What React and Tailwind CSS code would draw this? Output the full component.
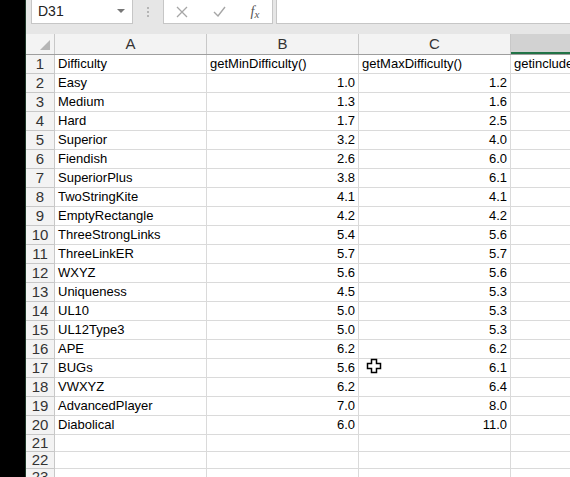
const rows = [
  ["Difficulty", "getMinDifficulty()", "getMaxDifficulty()", "getinclude"],
  ["Easy", "1.0", "1.2"],
  ["Medium", "1.3", "1.6"],
  ["Hard", "1.7", "2.5"],
  ["Superior", "3.2", "4.0"],
  ["Fiendish", "2.6", "6.0"],
  ["SuperiorPlus", "3.8", "6.1"],
  ["TwoStringKite", "4.1", "4.1"],
  ["EmptyRectangle", "4.2", "4.2"],
  ["ThreeStrongLinks", "5.4", "5.6"],
  ["ThreeLinkER", "5.7", "5.7"],
  ["WXYZ", "5.6", "5.6"],
  ["Uniqueness", "4.5", "5.3"],
  ["UL10", "5.0", "5.3"],
  ["UL12Type3", "5.0", "5.3"],
  ["APE", "6.2", "6.2"],
  ["BUGs", "5.6", "6.1"],
  ["VWXYZ", "6.2", "6.4"],
  ["AdvancedPlayer", "7.0", "8.0"],
  ["Diabolical", "6.0", "11.0"],
  [],
  [],
  [],
];

function Cursor() {
  return (
    <svg className="absolute left-[366px] top-[358px]" width="16" height="16" viewBox="0 0 16 16">
      <path
        d="M5.5 1.5h5v4h4v5h-4v4h-5v-4h-4v-5h4z"
        fill="#fff"
        stroke="#000"
        strokeWidth="1.5"
        strokeLinejoin="miter"
      />
    </svg>
  );
}

function FormulaBar() {
  return (
    <div className="flex h-[34px] shrink-0 items-start bg-[#e6e6e6] pl-[5px]">
      <div className="flex h-[24px] w-[102px] items-center justify-between border border-t-0 border-[#c6c6c6] bg-white pl-[6px] pr-[7px]">
        <span className="text-[14px] text-[#222]">D31</span>
        <svg width="8" height="5" viewBox="0 0 8 5">
          <path d="M0 0h8L4 4z" fill="#777" />
        </svg>
      </div>
      <div className="flex h-[24px] w-[30px] flex-col items-center justify-center gap-[2px]">
        <span className="h-[2px] w-[2px] bg-[#b5b5b5]" />
        <span className="h-[2px] w-[2px] bg-[#b5b5b5]" />
        <span className="h-[2px] w-[2px] bg-[#b5b5b5]" />
      </div>
      <div className="flex h-[24px] w-[110px] items-center border border-t-0 border-[#c6c6c6] bg-white">
        <div className="flex w-[36px] justify-center">
          <svg width="12" height="12" viewBox="0 0 12 12">
            <path d="M1 1l10 10M11 1L1 11" stroke="#a6a6a6" strokeWidth="1.3" />
          </svg>
        </div>
        <div className="flex w-[38px] justify-center">
          <svg width="13" height="11" viewBox="0 0 13 11">
            <path d="M1 6l4 4 7-9" stroke="#a6a6a6" strokeWidth="1.4" fill="none" />
          </svg>
        </div>
        <div className="flex w-[34px] items-end justify-center font-['Liberation_Serif',serif] text-[14px] italic text-[#555]">
          f<span className="text-[11px]">x</span>
        </div>
      </div>
      <div className="ml-[3px] h-[24px] flex-1 border border-t-0 border-r-0 border-[#c6c6c6] bg-white" />
    </div>
  );
}

function HeaderRow() {
  const cols = ["A", "B", "C"];
  return (
    <div className="flex h-[21px] shrink-0 border-b border-[#9e9e9e] bg-[#f3f3f3] text-[15px] text-[#333]">
      <div className="relative w-[29px] shrink-0 border-r border-[#c8c8c8]">
        <svg className="absolute bottom-[4px] right-[4px]" width="10" height="10" viewBox="0 0 10 10">
          <path d="M10 0v10H0z" fill="#b5b5b5" />
        </svg>
      </div>
      {cols.map((c) => (
        <div key={c} className="flex w-[152px] shrink-0 items-center justify-center border-r border-[#c8c8c8]">
          {c}
        </div>
      ))}
      <div className="flex-1 border-b-2 border-[#217346] bg-[#d2d2d2]" />
    </div>
  );
}

export default function App() {
  return (
    <div className="relative flex h-[477px] w-[570px] overflow-hidden bg-white font-['Liberation_Sans',Arial,sans-serif]">
      <div className="w-[25px] shrink-0 bg-black" />
      <div className="w-px shrink-0 bg-[#1f3a2a]" />
      <div className="flex min-w-0 flex-1 flex-col">
        <FormulaBar />
        <HeaderRow />
        {rows.map((r, i) => (
          <div
            key={i}
            className={`flex shrink-0 text-[13px] text-black ${r.length ? "h-[19px]" : "h-[17px]"}`}
          >
            <div className="flex w-[29px] shrink-0 items-center justify-center border-b border-r border-[#c8c8c8] bg-[#f3f3f3] text-[15px] text-[#333]">
              {i + 1}
            </div>
            <div className="flex w-[152px] shrink-0 items-center border-b border-r border-[#dadada] pl-[3px]">
              {r[0]}
            </div>
            <div
              className={`flex w-[152px] shrink-0 items-center border-b border-r border-[#dadada] ${
                i === 0 ? "pl-[3px]" : "justify-end pr-[3px]"
              }`}
            >
              {r[1]}
            </div>
            <div
              className={`flex w-[152px] shrink-0 items-center border-b border-r border-[#dadada] ${
                i === 0 ? "pl-[3px]" : "justify-end pr-[3px]"
              }`}
            >
              {r[2]}
            </div>
            <div className="flex flex-1 items-center overflow-hidden whitespace-nowrap border-b border-[#dadada] pl-[3px]">
              {r[3]}
            </div>
          </div>
        ))}
      </div>
      <Cursor />
    </div>
  );
}
